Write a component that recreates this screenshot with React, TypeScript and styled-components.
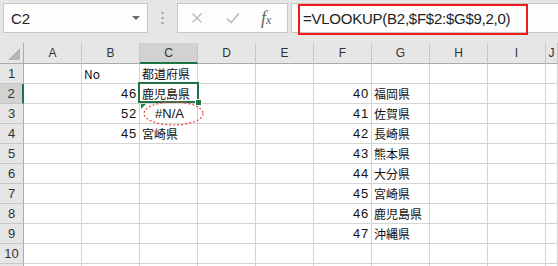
import React from "react";
import styled, { createGlobalStyle } from "styled-components";

const GlobalStyle = createGlobalStyle`
  html, body {
    margin: 0;
    padding: 0;
    background: #ffffff;
    overflow: hidden;
  }
  body {
    font-family: "Liberation Sans", "Noto Sans CJK JP", sans-serif;
  }
`;

const GREEN = "#217346";
const GRID = "#d4d4d4";
const HEAD_BG = "#e6e6e6";
const HEAD_SEL = "#d2d2d2";

const Window = styled.div`
  width: 558px;
  height: 266px;
  overflow: hidden;
  background: #fff;
`;

const FormulaBar = styled.div`
  display: flex;
  align-items: flex-start;
  height: 43px;
  box-sizing: border-box;
  padding: 3px 0 0 3px;
  background: ${HEAD_BG};
`;

const Box = styled.div`
  height: 30px;
  box-sizing: border-box;
  background: #fdfdfd;
  border: 1px solid #c6c6c6;
  display: flex;
  align-items: center;
`;

const NameBox = styled(Box)`
  width: 145px;
  padding: 0 6px 0 7px;
  justify-content: space-between;
  font-size: 15px;
  color: #222;
`;

const DropArrow = styled.span`
  width: 0;
  height: 0;
  border-left: 4px solid transparent;
  border-right: 4px solid transparent;
  border-top: 4px solid #6a6a6a;
  margin-right: 1px;
`;

const Grip = styled.div`
  width: 29px;
  height: 30px;
  display: flex;
  align-items: center;
  justify-content: center;
`;

const ButtonsBox = styled(Box)`
  width: 111px;
  padding-left: 13px;
  gap: 23px;
`;

const Fx = styled.span`
  font-family: "Liberation Serif", serif;
  font-style: italic;
  font-size: 18px;
  color: #666;
  margin-left: -2px;
  small {
    font-size: 12px;
  }
`;

const FormulaInput = styled(Box)`
  flex: 1;
  margin-left: 3px;
  border-right: none;
  padding-left: 11px;
  position: relative;
  font-size: 15px;
  color: #222;
  letter-spacing: -0.25px;
`;

const Highlight = styled.div`
  position: absolute;
  left: 6px;
  top: 0px;
  width: 230px;
  height: 31px;
  box-sizing: border-box;
  border: 2px solid #f01c1c;
  pointer-events: none;
`;

const Sheet = styled.div`
  display: grid;
  grid-template-columns: 24px repeat(9, 58px) 1fr;
  grid-template-rows: 21px;
  grid-auto-rows: 20px;
`;

const Corner = styled.div`
  background: ${HEAD_BG};
  border-right: 1px solid #ababab;
  border-bottom: 1px solid #ababab;
  display: flex;
  align-items: flex-end;
  justify-content: flex-end;
  padding: 0 3px 3px 0;
`;

const ColHead = styled.div<{ $sel?: boolean }>`
  background: ${(p) => (p.$sel ? HEAD_SEL : HEAD_BG)};
  border-right: 1px solid #c6c6c6;
  border-bottom: ${(p) => (p.$sel ? `2px solid ${GREEN}` : "1px solid #ababab")};
  display: flex;
  align-items: center;
  justify-content: center;
  font-size: 12px;
  color: #333;
`;

const RowHead = styled.div<{ $sel?: boolean }>`
  background: ${(p) => (p.$sel ? HEAD_SEL : HEAD_BG)};
  border-right: ${(p) => (p.$sel ? `2px solid ${GREEN}` : "1px solid #ababab")};
  border-bottom: 1px solid #c6c6c6;
  display: flex;
  align-items: center;
  justify-content: center;
  font-size: 13px;
  color: #333;
`;

type Kind = "num" | "text" | "error" | "empty";

const Cell = styled.div<{ $kind: Kind }>`
  position: relative;
  border-right: 1px solid ${GRID};
  border-bottom: 1px solid ${GRID};
  display: flex;
  align-items: center;
  line-height: 1;
  white-space: nowrap;
  color: #111;
  justify-content: ${(p) =>
    p.$kind === "num" ? "flex-end" : p.$kind === "error" ? "center" : "flex-start"};
  padding: ${(p) => (p.$kind === "num" ? "0 2px 0 0" : "0 0 0 2px")};
  font-family: ${(p) =>
    p.$kind === "text"
      ? `"Noto Sans CJK JP", sans-serif`
      : `"Liberation Sans", "Noto Sans CJK JP", sans-serif`};
  font-size: ${(p) => (p.$kind === "text" ? "12px" : "13px")};
  letter-spacing: ${(p) => (p.$kind === "num" ? "0.8px" : "0")};
`;

const Selection = styled.div`
  position: absolute;
  left: -2px;
  top: -2px;
  right: -2px;
  bottom: 0;
  border: 2px solid ${GREEN};
  z-index: 2;
  pointer-events: none;
`;

const FillHandle = styled.div`
  position: absolute;
  right: -5px;
  bottom: -5px;
  width: 5px;
  height: 5px;
  background: ${GREEN};
  border: 1px solid #fff;
`;

const ErrorFlag = styled.div`
  position: absolute;
  left: 1px;
  top: 0;
  width: 0;
  height: 0;
  border-top: 5px solid #1f8a3c;
  border-right: 5px solid transparent;
  z-index: 3;
`;

const Ring = styled.svg`
  position: absolute;
  left: 3px;
  top: -3px;
  z-index: 3;
  overflow: visible;
`;

const COLS = ["A", "B", "C", "D", "E", "F", "G", "H", "I", "J"];

type RowData = Partial<Record<string, string | number>>;

const rows: RowData[] = [
  { B: "No", C: "都道府県" },
  { B: 46, C: "鹿児島県", F: 40, G: "福岡県" },
  { B: 52, C: "#N/A", F: 41, G: "佐賀県" },
  { B: 45, C: "宮崎県", F: 42, G: "長崎県" },
  { F: 43, G: "熊本県" },
  { F: 44, G: "大分県" },
  { F: 45, G: "宮崎県" },
  { F: 46, G: "鹿児島県" },
  { F: 47, G: "沖縄県" },
  {},
];

function kindOf(v: string | number | undefined): Kind {
  if (v === undefined) return "empty";
  if (typeof v === "number") return "num";
  if (v.startsWith("#")) return "error";
  return "text";
}

function CornerMark() {
  return (
    <svg width="12" height="12" viewBox="0 0 12 12">
      <polygon points="12,0 12,12 0,12" fill="#b5b5b5" />
    </svg>
  );
}

function CancelIcon() {
  return (
    <svg width="12" height="12" viewBox="0 0 12 12">
      <path d="M1.5 1.5 L10.5 10.5 M10.5 1.5 L1.5 10.5" stroke="#b9b9b9" strokeWidth="1.4" fill="none" />
    </svg>
  );
}

function EnterIcon() {
  return (
    <svg width="14" height="12" viewBox="0 0 14 12">
      <path d="M1 6.5 L5 10.5 L13 1.5" stroke="#b9b9b9" strokeWidth="1.6" fill="none" />
    </svg>
  );
}

function GripDots() {
  return (
    <svg width="3" height="12" viewBox="0 0 3 12">
      <rect x="0.5" y="0" width="2" height="2" fill="#a0a0a0" />
      <rect x="0.5" y="5" width="2" height="2" fill="#a0a0a0" />
      <rect x="0.5" y="10" width="2" height="2" fill="#a0a0a0" />
    </svg>
  );
}

export default function App() {
  return (
    <Window>
      <GlobalStyle />
      <FormulaBar>
        <NameBox>
          <span>C2</span>
          <DropArrow />
        </NameBox>
        <Grip>
          <GripDots />
        </Grip>
        <ButtonsBox>
          <CancelIcon />
          <EnterIcon />
          <Fx>
            f<small>x</small>
          </Fx>
        </ButtonsBox>
        <FormulaInput>
          =VLOOKUP(B2,$F$2:$G$9,2,0)
          <Highlight />
        </FormulaInput>
      </FormulaBar>

      <Sheet>
        <Corner>
          <CornerMark />
        </Corner>
        {COLS.map((c) => (
          <ColHead key={c} $sel={c === "C"}>
            {c}
          </ColHead>
        ))}
        {rows.map((row, i) => {
          const r = i + 1;
          return (
            <React.Fragment key={r}>
              <RowHead $sel={r === 2}>{r}</RowHead>
              {COLS.map((c) => {
                const v = row[c];
                const isSel = r === 2 && c === "C";
                const isErr = r === 3 && c === "C";
                return (
                  <Cell key={c} $kind={kindOf(v)}>
                    {v}
                    {isSel && (
                      <Selection>
                        <FillHandle />
                      </Selection>
                    )}
                    {isErr && (
                      <>
                        <ErrorFlag />
                        <Ring width="61" height="25" viewBox="0 0 61 25">
                          <ellipse
                            cx="30.5"
                            cy="12.5"
                            rx="29.5"
                            ry="11.5"
                            fill="none"
                            stroke="#e8453c"
                            strokeWidth="1.2"
                            strokeDasharray="2 2"
                          />
                        </Ring>
                      </>
                    )}
                  </Cell>
                );
              })}
            </React.Fragment>
          );
        })}
        {/* partial row below 10, header number not visible */}
        <RowHead />
        {COLS.map((c) => (
          <Cell key={c} $kind="empty" />
        ))}
      </Sheet>
    </Window>
  );
}
